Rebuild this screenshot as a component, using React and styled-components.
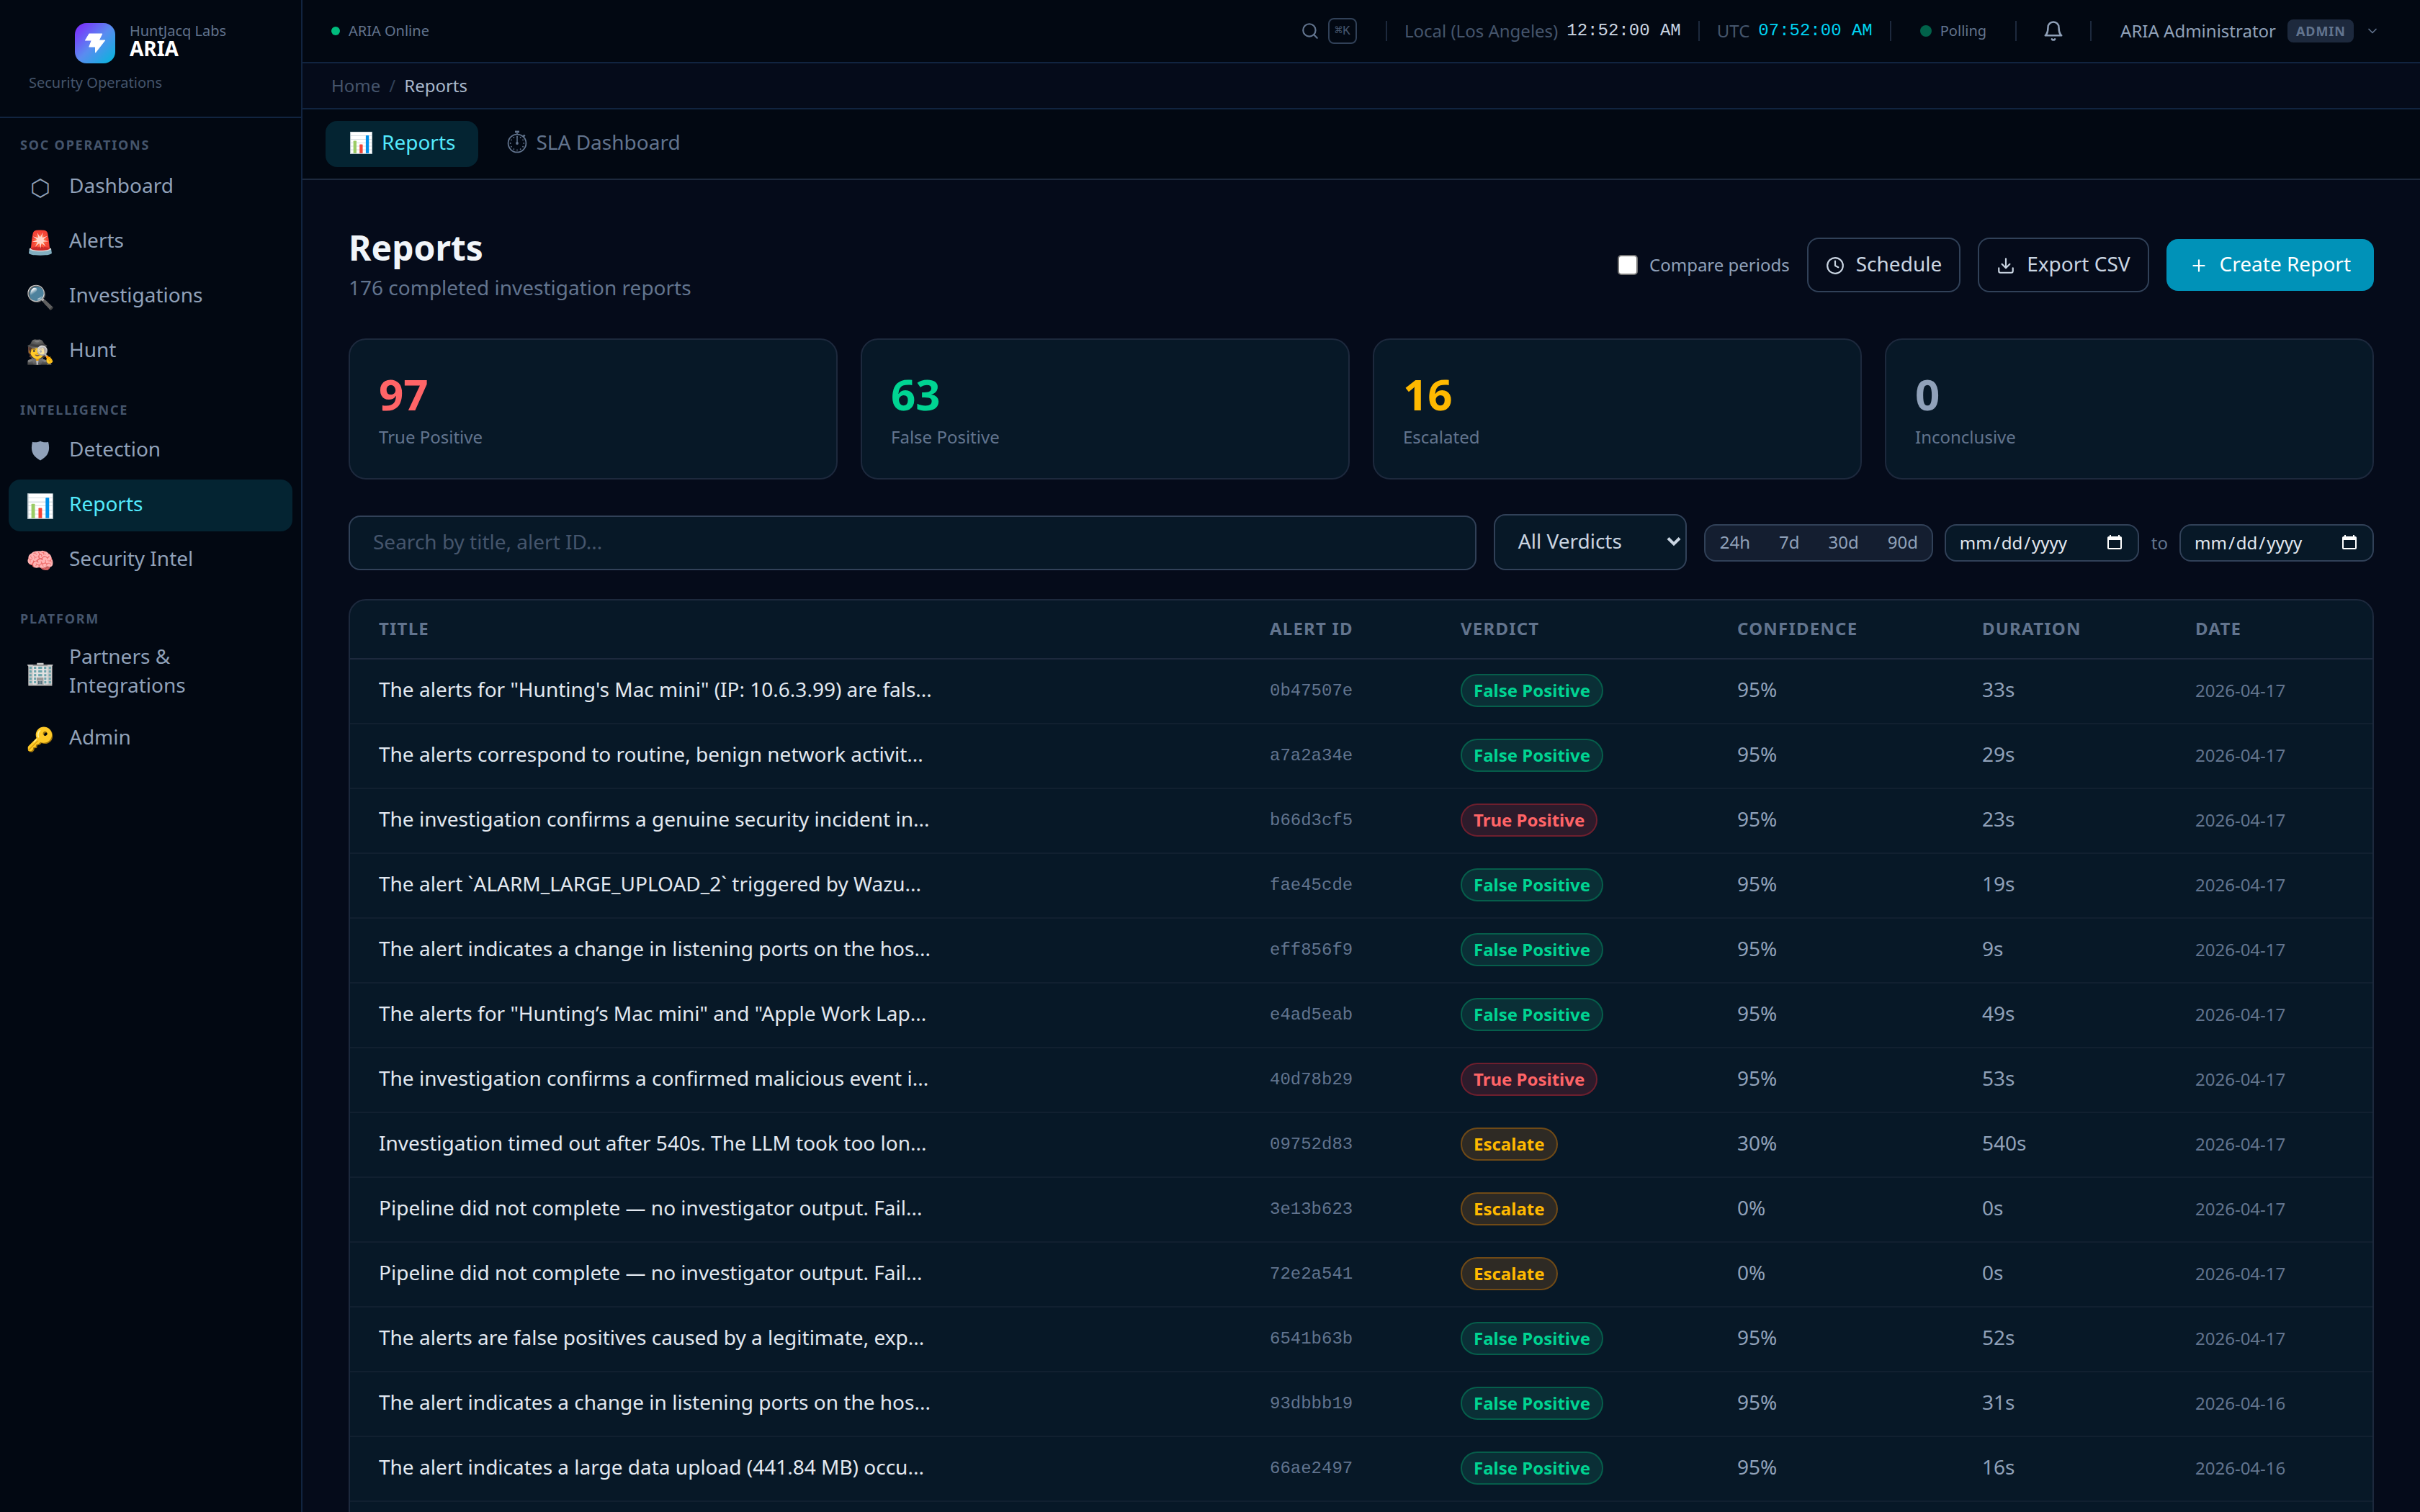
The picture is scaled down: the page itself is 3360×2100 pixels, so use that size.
import React from 'react';
import styled, { createGlobalStyle } from 'styled-components';
import { Search, Clock, Plus, ChevronDown } from 'lucide-react';

const GlobalStyle = createGlobalStyle`
  * { box-sizing: border-box; }
  body {
    margin: 0;
    background: #050b1a;
    color: #e2e8f0;
    font-family: 'Noto Sans', sans-serif;
    font-size: 28px;
    line-height: 40px;
  }
  button, input { font: inherit; color: inherit; }
`

const Shell = styled.div`
  display: flex;
  width: 3360px;
  height: 2100px;
  overflow: hidden;
`

const Sidebar = styled.aside`
  width: 420px;
  flex-shrink: 0;
  background: #020812;
  border-right: 2px solid #112440;
`

const Brand = styled.div`
  height: 164px;
  padding-top: 32px;
  border-bottom: 2px solid #112440;
`

const BrandRow = styled.div`
  display: flex;
  justify-content: center;
  gap: 20px;
  height: 56px;
`

const Logo = styled.div`
  width: 56px;
  height: 56px;
  border-radius: 16px;
  background: linear-gradient(135deg, #7f22fe, #5a8cf0 50%, #00b8db);
  svg { display: block; }
`

const BrandText = styled.div`
  span, strong { display: block; }
  span {
    font-size: 20px;
    line-height: 22px;
    color: #62748e;
  }
  strong {
    font-size: 28px;
    line-height: 27px;
    color: #fff;
  }
`

const Tagline = styled.div`
  margin-top: 11px;
  padding-left: 40px;
  font-size: 20px;
  line-height: 32px;
  color: #45556c;
`

const NavSection = styled.div`
  padding: ${props => props.$first ? 23 : 27}px 12px 0;
`

const NavLabel = styled.div`
  padding-left: 16px;
  margin-bottom: ${props => props.$gap}px;
  font-size: 18px;
  line-height: 28px;
  font-weight: 700;
  letter-spacing: 1.8px;
  color: #45556c;
`

const NavItem = styled.div`
  display: flex;
  align-items: center;
  gap: 20px;
  padding: 12px 24px;
  margin-bottom: 4px;
  border-radius: 16px;
  color: ${props => props.$active ? '#53eafd' : '#90a1b9'};
  background: ${props => props.$active ? '#042432' : 'transparent'};
`

const NavText = styled.span`
  margin: -3px 0 3px;
`

const NavIcon = styled.span`
  display: flex;
  justify-content: center;
  align-items: center;
  width: 40px;
  height: 48px;
  flex-shrink: 0;
  font-size: 32px;
  line-height: 48px;
`

const Main = styled.div`
  flex: 1;
  min-width: 0;
`

const TopBar = styled.header`
  display: flex;
  align-items: center;
  height: 88px;
  padding: 0 40px;
  background: #020812;
  border-bottom: 2px solid #112440;
`

const Status = styled.div`
  display: flex;
  align-items: center;
  gap: 12px;
  font-size: 20px;
  color: #62748e;
`

const Dot = styled.i`
  width: ${props => props.$size}px;
  height: ${props => props.$size}px;
  border-radius: 50%;
  background: ${props => props.$color};
`

const TopRight = styled.div`
  display: flex;
  align-items: center;
  margin-left: auto;
  gap: 24px;
  font-size: 24px;
`

const TopButton = styled.div`
  display: flex;
  align-items: center;
  gap: ${props => props.$gap || 12}px;
  padding: 0 ${props => props.$pad || 16}px;
  font-size: ${props => props.$small ? 20 : 24}px;
  color: ${props => props.$bright ? '#90a1b9' : '#62748e'};
`

const Kbd = styled.kbd`
  display: flex;
  align-items: center;
  justify-content: center;
  width: 40px;
  height: 36px;
  border: 2px solid #314158;
  border-radius: 8px;
  font-family: 'Liberation Mono', monospace;
  font-size: 18px;
  line-height: 28px;
  color: #45556c;
`

const Divider = styled.i`
  width: 2px;
  height: 28px;
  background: #1d293d;
`

const ClockText = styled.div`
  display: flex;
  align-items: center;
  gap: 12px;
  color: #45556c;
  b {
    font-family: 'Liberation Mono', monospace;
    font-weight: 400;
    color: ${props => props.$color};
  }
`

const Role = styled.span`
  width: 92px;
  height: 32px;
  padding-left: 12px;
  border-radius: 8px;
  background: #1d293d;
  color: #62748e;
  font-size: 18px;
  line-height: 32px;
  font-weight: 700;
  letter-spacing: 0.9px;
`

const Breadcrumb = styled.div`
  display: flex;
  align-items: center;
  gap: 12px;
  height: 64px;
  padding: 0 40px;
  border-bottom: 2px solid #112440;
  font-size: 24px;
  color: #45556c;
  i { font-style: normal; color: #314158; }
  b { font-weight: 400; color: #a9b8cc; }
`

const Tabs = styled.div`
  display: flex;
  gap: 8px;
  height: 98px;
  padding: 16px 32px;
  background: #020812;
  border-bottom: 2px solid #1d293d;
`

const Tab = styled.div`
  display: flex;
  align-items: center;
  gap: 11px;
  height: 64px;
  padding: 0 32px 6px;
  border-radius: 16px;
  color: ${props => props.$active ? '#53eafd' : '#62748e'};
  background: ${props => props.$active ? '#042432' : 'transparent'};
`

const Page = styled.main`
  padding: 64px;
`

const PageHead = styled.div`
  display: flex;
  align-items: center;
  justify-content: space-between;
  height: 108px;
  margin-bottom: 48px;
`

const Title = styled.h1`
  margin: -5px 0 3px;
  font-size: 48px;
  line-height: 64px;
  font-weight: 700;
  color: #f1f5f9;
`

const Subtitle = styled.p`
  margin: 0;
  color: #62748e;
`

const Actions = styled.div`
  display: flex;
  align-items: center;
  gap: 24px;
`

const Compare = styled.label`
  display: flex;
  align-items: center;
  gap: 16px;
  font-size: 24px;
  color: #90a1b9;
`

const Checkbox = styled.span`
  width: 28px;
  height: 28px;
  border: 2px solid #767676;
  border-radius: 5px;
  background: #fff;
`

const Button = styled.button`
  display: flex;
  align-items: center;
  gap: 16px;
  padding: ${props => props.$primary ? '14px 32px 18px' : '14px 24px 18px'};
  border: ${props => props.$primary ? 'none' : '2px solid #314158'};
  border-radius: 16px;
  background: ${props => props.$primary ? '#0092b8' : 'transparent'};
  color: ${props => props.$primary ? '#fff' : '#cad5e2'};
  line-height: 40px;
  svg { margin-top: 6px; }
`

const Stats = styled.div`
  display: grid;
  grid-template-columns: repeat(4, 1fr);
  gap: 32px;
  margin-bottom: 48px;
`

const StatCard = styled.div`
  height: 196px;
  padding: 39px 40px;
  border: 2px solid #1d293d;
  border-radius: 24px;
  background: #071827;
`

const StatValue = styled.div`
  margin-bottom: 8px;
  font-size: 60px;
  line-height: 72px;
  font-weight: 700;
  color: ${props => props.$color};
`

const StatLabel = styled.div`
  font-size: 24px;
  line-height: 32px;
  color: #62748e;
`

const Filters = styled.div`
  display: flex;
  align-items: center;
  height: 78px;
  margin-bottom: 40px;
`

const SearchInput = styled.input`
  flex: 1;
  min-width: 0;
  height: 76px;
  margin: 2px 24px 0 0;
  padding: 0 32px 5px;
  border: 2px solid #314158;
  border-radius: 16px;
  background: #071827;
  outline: none;
  &::placeholder { color: #45556c; opacity: 1; }
`

const Select = styled.div`
  display: flex;
  align-items: center;
  justify-content: space-between;
  width: 268px;
  height: 78px;
  margin-right: 24px;
  padding: 0 6px 4px 32px;
  border: 2px solid #314158;
  border-radius: 16px;
  background: #071827;
  color: #cad5e2;
  svg { margin-top: 2px; }
`

const RangeGroup = styled.div`
  display: flex;
  height: 52px;
  width: 318px;
  margin: 2px 16px 0 0;
  border: 2px solid #314158;
  border-radius: 16px;
  background: #141e30;
  font-size: 24px;
  line-height: 46px;
  color: #90a1b9;
  span { padding: 0 20px; }
`

const DateField = styled.div`
  display: flex;
  align-items: center;
  justify-content: space-between;
  width: 270px;
  height: 52px;
  margin-top: 2px;
  padding: 0 20px 0 17px;
  border: 2px solid #314158;
  border-radius: 16px;
  background: #071827;
  font-size: 24px;
  line-height: 46px;
  color: #e2e8f0;
  em { font-style: normal; padding: 0 2px; }
`

const To = styled.span`
  margin: 2px 16px 0 17px;
  font-size: 24px;
  color: #62748e;
`

const TableCard = styled.div`
  height: 1400px;
  border: 2px solid #1d293d;
  border-radius: 24px;
  background: #071827;
`

const Row = styled.div`
  display: grid;
  grid-template-columns: 1237px 265px 384px 340px 296px 1fr;
  align-items: center;
  height: 90px;
  border-bottom: 2px solid #112030;
  > div { padding-left: 40px; white-space: nowrap; }
`

const HeadRow = styled(Row)`
  height: 82px;
  padding-bottom: 3px;
  border-bottom-color: #1d293d;
  font-size: 24px;
  font-weight: 700;
  letter-spacing: 1.2px;
  color: #62748e;
`

const TitleCell = styled.div`
  padding-bottom: 6px;
`

const AlertId = styled.div`
  font-family: 'Liberation Mono', monospace;
  font-size: 24px;
  color: #62748e;
`

const Metric = styled.div`
  padding-bottom: 6px;
  color: #90a1b9;
`

const DateCell = styled.div`
  padding-bottom: 3px;
  font-size: 24px;
  color: #62748e;
`

const verdicts = {
  fp: { label: 'False Positive', color: '#00d492', bg: '#0a2f36', border: '#065e4b' },
  tp: { label: 'True Positive', color: '#ff6467', bg: '#2d1b2b', border: '#6e1f2e' },
  esc: { label: 'Escalate', color: '#ffb900', bg: '#2e2a24', border: '#704a16' },
}

const Pill = styled.span`
  display: block;
  width: fit-content;
  height: 46px;
  margin-bottom: 2px;
  padding: 0 16px;
  border: 2px solid ${props => props.$v.border};
  border-radius: 23px;
  background: ${props => props.$v.bg};
  color: ${props => props.$v.color};
  font-size: 24px;
  line-height: 42px;
  font-weight: 700;
`

const LogoMark = () => (
  <svg width="56" height="56" viewBox="0 0 56 56" fill="#fff" stroke="#fff" strokeWidth="1.2" strokeLinejoin="round">
    <path d="M20 15h17.6l-4.4 9h8.4L28.6 40.6V33H20l3.4-9H14.6z" />
  </svg>
)

const BellIcon = () => (
  <svg width="30" height="30" viewBox="0 0 24 24" fill="none" stroke="currentColor" strokeWidth="2" strokeLinecap="round" strokeLinejoin="round">
    <path d="M18 8A6 6 0 0 0 6 8c0 7-3 9-3 9h18s-3-2-3-9" />
    <path d="M13.73 21a2 2 0 0 1-3.46 0" />
  </svg>
)

const DownloadIcon = () => (
  <svg width="26" height="26" viewBox="0 0 24 24" fill="none" stroke="currentColor" strokeWidth="2" strokeLinecap="round" strokeLinejoin="round">
    <path d="M21 15v4a2 2 0 0 1-2 2H5a2 2 0 0 1-2-2v-4" />
    <path d="M7 10l5 5 5-5M12 15V3" />
  </svg>
)

const CalendarIcon = () => (
  <svg width="24" height="24" viewBox="0 0 24 24" fill="#fff">
    <path d="M20 3h-1V1h-2v2H7V1H5v2H4c-1.1 0-2 .9-2 2v14c0 1.1.9 2 2 2h16c1.1 0 2-.9 2-2V5c0-1.1-.9-2-2-2zm0 16H4V8h16v11z" />
  </svg>
)

const SelectArrow = () => (
  <svg width="20" height="14" viewBox="0 0 20 14" fill="none" stroke="currentColor" strokeWidth="4">
    <path d="M2 2.5l8 8 8-8" />
  </svg>
)

const ShieldIcon = () => (
  <svg width="26" height="28" viewBox="0 0 26 28" fill="currentColor">
    <path d="M13 .5C15 2 20 3 24 1.8C26.5 12 25.5 21 13 27.5C.5 21-.5 12 2 1.8C6 3 11 2 13 .5z" />
  </svg>
)

// dial marks sit on a ring inside the watch face
const marks = [...Array(12)].map((_, i) => {
  const a = (i * Math.PI) / 6
  return [14 + 9.3 * Math.sin(a), 18 - 9.3 * Math.cos(a)]
})

const StopwatchIcon = () => (
  <svg width="29" height="32" viewBox="0 0 29 32" fill="none" stroke="currentColor" strokeWidth="1.8">
    <circle cx="14" cy="18" r="12.4" />
    <path d="M14 18V8.5M14 3.5v2.5" strokeWidth="1.5" />
    <path d="M11 2h6" strokeWidth="2.8" />
    <path d="M22.6 8.6l2-2" strokeWidth="2.6" />
    <circle cx="14" cy="18" r="1.9" fill="currentColor" stroke="none" />
    {marks.map(([x, y], i) => <circle key={i} cx={x} cy={y} r="0.9" fill="currentColor" stroke="none" />)}
  </svg>
)

const nav = [
  { label: 'SOC OPERATIONS', gap: 9, items: [['⬡', 'Dashboard'], ['🚨', 'Alerts'], ['🔍', 'Investigations'], ['🕵️', 'Hunt']] },
  { label: 'INTELLIGENCE', gap: 7, items: [[<ShieldIcon />, 'Detection'], ['📊', 'Reports'], ['🧠', 'Security Intel']] },
  { label: 'PLATFORM', gap: 9, items: [['🏢', 'Partners & Integrations'], ['🔑', 'Admin']] },
]

const stats = [
  ['97', 'True Positive', '#ff6467'],
  ['63', 'False Positive', '#00d492'],
  ['16', 'Escalated', '#ffb900'],
  ['0', 'Inconclusive', '#90a1b9'],
]

const reports = [
  ['The alerts for "Hunting\'s Mac mini" (IP: 10.6.3.99) are fals...', '0b47507e', 'fp', '95%', '33s', '2026-04-17'],
  ['The alerts correspond to routine, benign network activit...', 'a7a2a34e', 'fp', '95%', '29s', '2026-04-17'],
  ['The investigation confirms a genuine security incident in...', 'b66d3cf5', 'tp', '95%', '23s', '2026-04-17'],
  ['The alert `ALARM_LARGE_UPLOAD_2` triggered by Wazu...', 'fae45cde', 'fp', '95%', '19s', '2026-04-17'],
  ['The alert indicates a change in listening ports on the hos...', 'eff856f9', 'fp', '95%', '9s', '2026-04-17'],
  ['The alerts for "Hunting’s Mac mini" and "Apple Work Lap...', 'e4ad5eab', 'fp', '95%', '49s', '2026-04-17'],
  ['The investigation confirms a confirmed malicious event i...', '40d78b29', 'tp', '95%', '53s', '2026-04-17'],
  ['Investigation timed out after 540s. The LLM took too lon...', '09752d83', 'esc', '30%', '540s', '2026-04-17'],
  ['Pipeline did not complete — no investigator output. Fail...', '3e13b623', 'esc', '0%', '0s', '2026-04-17'],
  ['Pipeline did not complete — no investigator output. Fail...', '72e2a541', 'esc', '0%', '0s', '2026-04-17'],
  ['The alerts are false positives caused by a legitimate, exp...', '6541b63b', 'fp', '95%', '52s', '2026-04-17'],
  ['The alert indicates a change in listening ports on the hos...', '93dbbb19', 'fp', '95%', '31s', '2026-04-16'],
  ['The alert indicates a large data upload (441.84 MB) occu...', '66ae2497', 'fp', '95%', '16s', '2026-04-16'],
]

const DateInput = () => (
  <DateField>
    <span><em>mm</em>/<em>dd</em>/<em>yyyy</em></span>
    <CalendarIcon />
  </DateField>
)

class App extends React.Component {
  renderSidebar() {
    return (
      <Sidebar>
        <Brand>
          <BrandRow>
            <Logo><LogoMark /></Logo>
            <BrandText>
              <span>HuntJacq Labs</span>
              <strong>ARIA</strong>
            </BrandText>
          </BrandRow>
          <Tagline>Security Operations</Tagline>
        </Brand>
        {nav.map((section, i) => (
          <NavSection key={section.label} $first={i === 0}>
            <NavLabel $gap={section.gap}>{section.label}</NavLabel>
            {section.items.map(([icon, label]) => (
              <NavItem key={label} $active={label === 'Reports'}>
                <NavIcon>{icon}</NavIcon>
                <NavText>{label}</NavText>
              </NavItem>
            ))}
          </NavSection>
        ))}
      </Sidebar>
    )
  }

  renderTopBar() {
    return (
      <TopBar>
        <Status><Dot $size={12} $color="#00bc7d" />ARIA Online</Status>
        <TopRight>
          <TopButton>
            <Search size={26} />
            <Kbd>⌘K</Kbd>
          </TopButton>
          <Divider />
          <ClockText $color="#cad5e2">Local (Los Angeles)<b>12:52:00 AM</b></ClockText>
          <Divider />
          <ClockText $color="#00d3f2">UTC<b>07:52:00 AM</b></ClockText>
          <Divider />
          <TopButton $small><Dot $size={16} $color="#01624a" />Polling</TopButton>
          <Divider />
          <TopButton $pad={12} $bright><BellIcon /></TopButton>
          <Divider />
          <TopButton $gap={16} $bright>
            ARIA Administrator
            <Role>ADMIN</Role>
            <ChevronDown size={20} color="#62748e" />
          </TopButton>
        </TopRight>
      </TopBar>
    )
  }

  render() {
    return (
      <Shell>
        <GlobalStyle />
        {this.renderSidebar()}
        <Main>
          {this.renderTopBar()}
          <Breadcrumb>Home<i>/</i><b>Reports</b></Breadcrumb>
          <Tabs>
            <Tab $active><span>📊</span>Reports</Tab>
            <Tab><StopwatchIcon />SLA Dashboard</Tab>
          </Tabs>
          <Page>
            <PageHead>
              <div>
                <Title>Reports</Title>
                <Subtitle>176 completed investigation reports</Subtitle>
              </div>
              <Actions>
                <Compare><Checkbox />Compare periods</Compare>
                <Button><Clock size={26} />Schedule</Button>
                <Button><DownloadIcon />Export CSV</Button>
                <Button $primary><Plus size={26} />Create Report</Button>
              </Actions>
            </PageHead>
            <Stats>
              {stats.map(([value, label, color]) => (
                <StatCard key={label}>
                  <StatValue $color={color}>{value}</StatValue>
                  <StatLabel>{label}</StatLabel>
                </StatCard>
              ))}
            </Stats>
            <Filters>
              <SearchInput placeholder="Search by title, alert ID..." />
              <Select>All Verdicts<SelectArrow /></Select>
              <RangeGroup>
                <span>24h</span><span>7d</span><span>30d</span><span>90d</span>
              </RangeGroup>
              <DateInput />
              <To>to</To>
              <DateInput />
            </Filters>
            <TableCard>
              <HeadRow>
                <div>TITLE</div>
                <div>ALERT ID</div>
                <div>VERDICT</div>
                <div>CONFIDENCE</div>
                <div>DURATION</div>
                <div>DATE</div>
              </HeadRow>
              {reports.map(([title, id, verdict, confidence, duration, date]) => (
                <Row key={id}>
                  <TitleCell>{title}</TitleCell>
                  <AlertId>{id}</AlertId>
                  <div><Pill $v={verdicts[verdict]}>{verdicts[verdict].label}</Pill></div>
                  <Metric>{confidence}</Metric>
                  <Metric>{duration}</Metric>
                  <DateCell>{date}</DateCell>
                </Row>
              ))}
            </TableCard>
          </Page>
        </Main>
      </Shell>
    )
  }
}

export default App;
